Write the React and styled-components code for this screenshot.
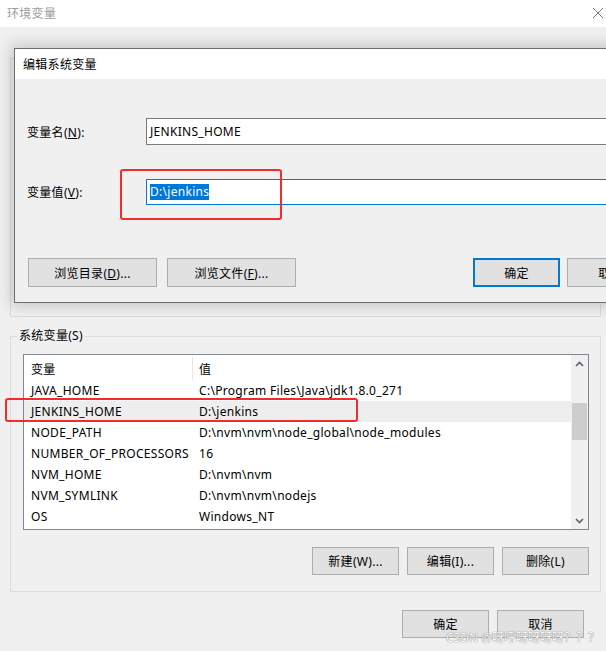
import React from "react";
import styled, { createGlobalStyle, css } from "styled-components";

const GlobalStyle = createGlobalStyle`
  html, body { margin: 0; padding: 0; }
  body {
    background: #f0f0f0;
    font-family: "Noto Sans", "Noto Sans CJK SC", sans-serif;
    font-size: 12px;
    letter-spacing: 0.3px;
    color: #000;
  }
  * { box-sizing: border-box; }
`;

const Window = styled.div`
  position: relative;
  width: 606px;
  height: 651px;
  overflow: hidden;
  background: #f0f0f0;
`;

const TitleBar = styled.div`
  height: 27px;
  background: #fff;
  display: flex;
  align-items: center;
  justify-content: space-between;
  padding: 0 2px 2px 7px;
`;

const TitleText = styled.span`
  color: #9c9c9c;
  font-size: 12px;
`;

const Body = styled.div`
  display: flex;
  flex-direction: column;
  padding: 31px 5px 0 10px;
`;

const GroupBox = styled.div`
  position: relative;
  border: 1px solid #dcdcdc;
  height: ${(p) => p.$h}px;
  margin-top: ${(p) => p.$mt || 0}px;
  padding: 17px 11px 0 12px;
`;

const Legend = styled.span`
  position: absolute;
  top: -10px;
  left: 6px;
  padding: 0 2px;
  background: #f0f0f0;
  line-height: 18px;
`;

const ListView = styled.div`
  height: 176px;
  border: 1px solid #828790;
  background: #fff;
  display: flex;
`;

const ListMain = styled.div`
  flex: 1;
  display: flex;
  flex-direction: column;
`;

const gridCols = css`
  display: grid;
  grid-template-columns: 169px 1fr;
  align-items: center;
`;

const HeaderRow = styled.div`
  ${gridCols};
  height: 25px;
  align-items: stretch;
`;

const HeaderCell = styled.div`
  display: flex;
  align-items: center;
  padding-left: ${(p) => (p.$first ? 7 : 6)}px;
  margin-top: 2px;
  border-right: ${(p) => (p.$first ? "1px solid #e5e5e5" : "none")};
`;

const Row = styled.div`
  ${gridCols};
  height: 21px;
  background: ${(p) => (p.$selected ? "#eeeeee" : "#fff")};
`;

const Cell = styled.div`
  padding-left: ${(p) => (p.$first ? 7 : 6)}px;
  white-space: nowrap;
  overflow: hidden;
`;

const ScrollBar = styled.div`
  width: 17px;
  background: #f0f0f0;
  display: flex;
  flex-direction: column;
`;

const ScrollArrow = styled.div`
  height: 17px;
  display: flex;
  align-items: center;
  justify-content: center;
`;

const ScrollTrack = styled.div`
  flex: 1;
  padding: 0 1px;
`;

const Thumb = styled.div`
  height: 37px;
  background: #cdcdcd;
`;

const ButtonRow = styled.div`
  display: flex;
  justify-content: flex-end;
  gap: ${(p) => p.$gap || 8}px;
  margin-top: ${(p) => p.$mt || 0}px;
  padding-right: ${(p) => p.$pr || 0}px;
`;

const Button = styled.button`
  width: ${(p) => p.$w || 87}px;
  height: ${(p) => p.$h || 28}px;
  background: #e1e1e1;
  border: ${(p) => (p.$default ? "2px solid #0078d7" : "1px solid #adadad")};
  font-family: inherit;
  font-size: 12px;
  letter-spacing: inherit;
  color: #000;
  padding: 0;
  flex-shrink: 0;
`;

const Dialog = styled.div`
  position: absolute;
  left: 14px;
  top: 48px;
  width: 653px;
  height: 255px;
  border: 1px solid #6e6e6e;
  background: #f0f0f0;
  box-shadow: 0 0 14px 3px rgba(0, 0, 0, 0.18);
  display: flex;
  flex-direction: column;
`;

const DialogTitle = styled.div`
  height: 30px;
  background: #fff;
  display: flex;
  align-items: center;
  padding-left: 8px;
`;

const DialogBody = styled.div`
  padding: 39px 12px 0 12px;
  display: flex;
  flex-direction: column;
`;

const FieldRow = styled.div`
  display: flex;
  align-items: center;
  margin-top: ${(p) => p.$mt || 0}px;
`;

const Label = styled.span`
  width: 119px;
  flex-shrink: 0;
`;

const Input = styled.div`
  flex: 1;
  height: ${(p) => p.$h}px;
  background: #fff;
  border: 1px solid ${(p) => (p.$focused ? "#0078d7" : "#7a7a7a")};
  padding-left: 3px;
  display: flex;
  align-items: center;
`;

const Selection = styled.span`
  background: #0078d7;
  color: #fff;
  line-height: 16px;
`;

const DialogButtons = styled.div`
  display: flex;
  margin-top: 53px;
  padding-left: 1px;
`;

const LeftGroup = styled.div`
  display: flex;
  gap: 10px;
`;

const RightGroup = styled.div`
  display: flex;
  gap: 7px;
  margin-left: auto;
`;

const Mark = styled.div`
  position: absolute;
  left: ${(p) => p.$x}px;
  top: ${(p) => p.$y}px;
  width: ${(p) => p.$w}px;
  height: ${(p) => p.$h}px;
  border: 2.5px solid #f42b2b;
  border-radius: 3px;
`;

const Watermark = styled.div`
  position: absolute;
  right: 6px;
  bottom: 5px;
  font-size: 12px;
  letter-spacing: 0;
  color: rgba(255, 255, 255, 0.95);
  text-shadow: 0 0 1px #8a8a8a, 0 0 1px #8a8a8a;
`;

const CloseIcon = () => (
  <svg width="12" height="12" viewBox="0 0 12 12">
    <path d="M1 1 L11 11 M11 1 L1 11" stroke="#7a7a7a" strokeWidth="1" />
  </svg>
);

const Chevron = ({ up }) => (
  <svg width="9" height="6" viewBox="0 0 9 6">
    <path
      d={up ? "M1 5 L4.5 1.5 L8 5" : "M1 1 L4.5 4.5 L8 1"}
      stroke="#606060"
      strokeWidth="1.6"
      fill="none"
    />
  </svg>
);

const rows = [
  ["JAVA_HOME", "C:\\Program Files\\Java\\jdk1.8.0_271"],
  ["JENKINS_HOME", "D:\\jenkins"],
  ["NODE_PATH", "D:\\nvm\\nvm\\node_global\\node_modules"],
  ["NUMBER_OF_PROCESSORS", "16"],
  ["NVM_HOME", "D:\\nvm\\nvm"],
  ["NVM_SYMLINK", "D:\\nvm\\nvm\\nodejs"],
  ["OS", "Windows_NT"],
];

export default function App() {
  return (
    <>
      <GlobalStyle />
      <Window>
        <TitleBar>
          <TitleText>环境变量</TitleText>
          <CloseIcon />
        </TitleBar>
        <Body>
          <GroupBox $h={259} />
          <GroupBox $h={256} $mt={19}>
            <Legend>系统变量(S)</Legend>
            <ListView>
              <ListMain>
                <HeaderRow>
                  <HeaderCell $first>变量</HeaderCell>
                  <HeaderCell>值</HeaderCell>
                </HeaderRow>
                {rows.map(([k, v]) => (
                  <Row key={k} $selected={k === "JENKINS_HOME"}>
                    <Cell $first>{k}</Cell>
                    <Cell>{v}</Cell>
                  </Row>
                ))}
              </ListMain>
              <ScrollBar>
                <ScrollArrow>
                  <Chevron up />
                </ScrollArrow>
                <ScrollTrack>
                  <Thumb style={{ marginTop: 31 }} />
                </ScrollTrack>
                <ScrollArrow>
                  <Chevron />
                </ScrollArrow>
              </ScrollBar>
            </ListView>
            <ButtonRow $mt={17}>
              <Button>新建(W)...</Button>
              <Button>编辑(I)...</Button>
              <Button>删除(L)</Button>
            </ButtonRow>
          </GroupBox>
          <ButtonRow $mt={18} $pr={17}>
            <Button>确定</Button>
            <Button>取消</Button>
          </ButtonRow>
        </Body>

        <Dialog>
          <DialogTitle>编辑系统变量</DialogTitle>
          <DialogBody>
            <FieldRow>
              <Label>变量名(<u>N</u>):</Label>
              <Input $h={27}>JENKINS_HOME</Input>
            </FieldRow>
            <FieldRow $mt={34}>
              <Label>变量值(<u>V</u>):</Label>
              <Input $h={26} $focused>
                <Selection>D:\jenkins</Selection>
              </Input>
            </FieldRow>
            <DialogButtons>
              <LeftGroup>
                <Button $w={129} $h={29}>浏览目录(<u>D</u>)...</Button>
                <Button $w={129} $h={29}>浏览文件(<u>F</u>)...</Button>
              </LeftGroup>
              <RightGroup>
                <Button $h={29} $default>确定</Button>
                <Button $h={29}>取消</Button>
              </RightGroup>
            </DialogButtons>
          </DialogBody>
        </Dialog>

        <Mark $x={120} $y={169} $w={162} $h={51} />
        <Mark $x={5} $y={398} $w={353} $h={24} />
        <Watermark>CSDN @呀呼呀呀呀呀？？？</Watermark>
      </Window>
    </>
  );
}
